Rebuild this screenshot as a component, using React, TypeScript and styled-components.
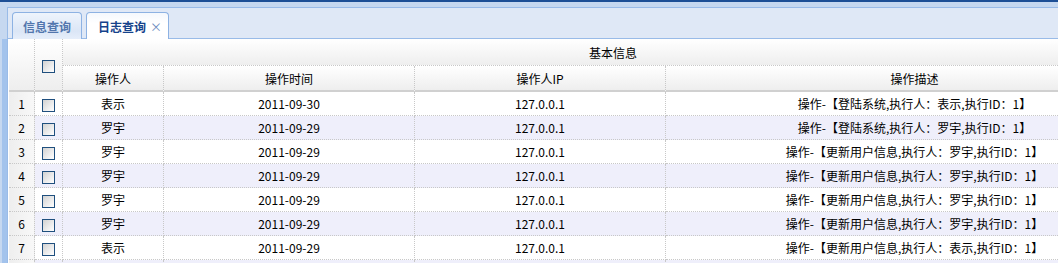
import React from "react";
import styled, { createGlobalStyle } from "styled-components";

const Global = createGlobalStyle`
  html, body { margin: 0; padding: 0; overflow: hidden; background: #c6d8f0; }
  * { box-sizing: border-box; }
`;

const Page = styled.div`
  display: flex;
  height: 263px;
  background: #c6d8f0;
  border-top: 2px solid #1d4f96;
  padding-top: 5px;
  overflow: hidden;
  font-family: "Noto Sans CJK SC", "Noto Sans", sans-serif;
  font-size: 12px;
  color: #000;
`;

const Gutter = styled.div`
  width: 7px;
  flex: none;
  display: flex;
  flex-direction: column;
`;

const GutterTop = styled.div`
  height: 32px;
  flex: none;
`;

const GutterBar = styled.div`
  flex: 1;
  margin-left: 2px;
  background: #a3c3ec;
`;

const Panel = styled.div`
  flex: 1;
  min-width: 0;
  display: flex;
  flex-direction: column;
  border-top: 1px solid #99bbe8;
  border-left: 1px solid #99bbe8;
  background: #fff;
`;

const TabStrip = styled.div`
  height: 31px;
  flex: none;
  display: flex;
  align-items: flex-end;
  gap: 4px;
  padding-left: 4px;
  background: #dfe8f6;
  border-bottom: 1px solid #99bbe8;
`;

const Tab = styled.div<{ $active?: boolean }>`
  height: 27px;
  margin-bottom: -1px;
  display: flex;
  align-items: center;
  gap: 4px;
  padding: ${(p) => (p.$active ? "0 6px 0 11px" : "0 10px")};
  border: 1px solid #8db2e3;
  border-bottom: none;
  border-radius: 4px 4px 0 0;
  font-weight: bold;
  color: ${(p) => (p.$active ? "#15428b" : "#5276ad")};
  background: ${(p) =>
    p.$active
      ? "linear-gradient(#f4f8fd, #ffffff 40%)"
      : "linear-gradient(#eef4fc, #dbe6f6 70%, #e6eefa)"};
`;

const Close = styled.span`
  font-weight: normal;
  font-size: 12px;
  color: #6d8cbf;
`;

const GridWrap = styled.div`
  flex: 1;
  overflow: hidden;
  padding-left: 1px;
`;

const Table = styled.table`
  table-layout: fixed;
  width: 1155px;
  border-collapse: separate;
  border-spacing: 0;
`;

const Th = styled.th<{ $last?: boolean; $tall?: number }>`
  padding: 0 4px;
  font-weight: normal;
  text-align: center;
  background: linear-gradient(#ffffff, #eeeeee);
  border-right: 1px dotted #c8c8c8;
  border-bottom: ${(p) => (p.$last ? "2px solid #d0d0d0" : "1px dotted #c8c8c8")};
  height: ${(p) => p.$tall ?? 26}px;
`;

const Tr = styled.tr<{ $alt?: boolean }>`
  background: ${(p) => (p.$alt ? "#efeffb" : "#ffffff")};
`;

const Td = styled.td`
  height: 24px;
  padding: 0 4px;
  text-align: center;
  white-space: nowrap;
  overflow: hidden;
  border-right: 1px dotted #c8c8c8;
  border-bottom: 1px dotted #c8c8c8;
`;

const RowNum = styled(Td)`
  background: linear-gradient(to right, #eeeeee, #f8f8f8);
`;

const Check = styled.span`
  display: inline-block;
  width: 13px;
  height: 13px;
  vertical-align: middle;
  border: 1px solid #1f4f7e;
  background: linear-gradient(135deg, #d2d2d2 0%, #f2f2f2 70%, #ffffff 100%);
`;

const rows = [
  ["表示", "2011-09-30", "127.0.0.1", "操作-【登陆系统,执行人：表示,执行ID：1】"],
  ["罗宇", "2011-09-29", "127.0.0.1", "操作-【登陆系统,执行人：罗宇,执行ID：1】"],
  ["罗宇", "2011-09-29", "127.0.0.1", "操作-【更新用户信息,执行人：罗宇,执行ID：1】"],
  ["罗宇", "2011-09-29", "127.0.0.1", "操作-【更新用户信息,执行人：罗宇,执行ID：1】"],
  ["罗宇", "2011-09-29", "127.0.0.1", "操作-【更新用户信息,执行人：罗宇,执行ID：1】"],
  ["罗宇", "2011-09-29", "127.0.0.1", "操作-【更新用户信息,执行人：罗宇,执行ID：1】"],
  ["表示", "2011-09-29", "127.0.0.1", "操作-【更新用户信息,执行人：表示,执行ID：1】"],
];

export default function App() {
  return (
    <>
      <Global />
      <Page>
        <Gutter>
          <GutterTop />
          <GutterBar />
        </Gutter>
        <Panel>
          <TabStrip>
            <Tab>信息查询</Tab>
            <Tab $active>
              日志查询<Close>×</Close>
            </Tab>
          </TabStrip>
          <GridWrap>
            <Table>
              <colgroup>
                <col style={{ width: 26 }} />
                <col style={{ width: 28 }} />
                <col style={{ width: 101 }} />
                <col style={{ width: 251 }} />
                <col style={{ width: 251 }} />
                <col style={{ width: 498 }} />
              </colgroup>
              <thead>
                <tr>
                  <Th rowSpan={2} $last $tall={53} />
                  <Th rowSpan={2} $last $tall={53}>
                    <Check />
                  </Th>
                  <Th colSpan={4} $tall={27}>基本信息</Th>
                </tr>
                <tr>
                  <Th $last>操作人</Th>
                  <Th $last>操作时间</Th>
                  <Th $last>操作人IP</Th>
                  <Th $last>操作描述</Th>
                </tr>
              </thead>
              <tbody>
                {rows.map((r, i) => (
                  <Tr key={i} $alt={i % 2 === 1}>
                    <RowNum>{i + 1}</RowNum>
                    <Td>
                      <Check />
                    </Td>
                    {r.map((c, j) => (
                      <Td key={j}>{c}</Td>
                    ))}
                  </Tr>
                ))}
                <Tr $alt>
                  <RowNum />
                  <Td />
                  <Td />
                  <Td />
                  <Td />
                  <Td />
                </Tr>
              </tbody>
            </Table>
          </GridWrap>
        </Panel>
      </Page>
    </>
  );
}
